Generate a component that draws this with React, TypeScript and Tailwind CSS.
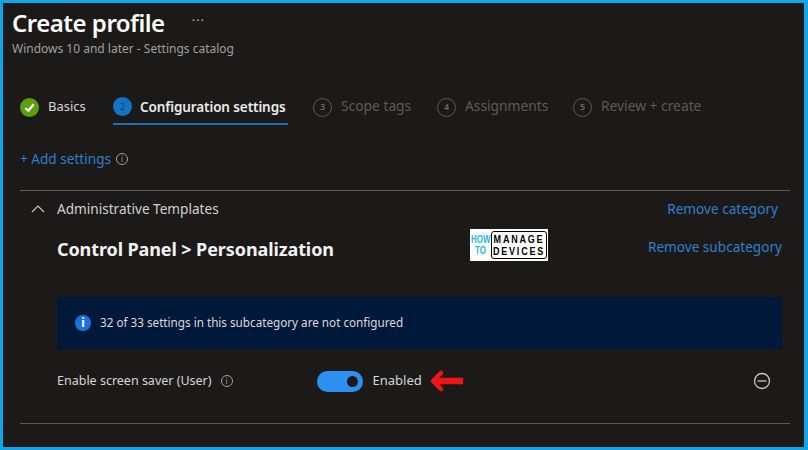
const STEPS = [
  { n: "3", label: "Scope tags", w: "w-[124px]" },
  { n: "4", label: "Assignments", w: "w-[136px]" },
  { n: "5", label: "Review + create", w: "w-auto" },
];

function InfoDot({ className }: { className: string }) {
  return (
    <span
      className={`flex h-3 w-3 items-center justify-center rounded-full border border-[#a19f9d] text-[8px] leading-none text-[#a19f9d] ${className}`}
    >
      i
    </span>
  );
}

export default function App() {
  return (
    <div
      className="flex h-[450px] w-[808px] flex-col overflow-hidden border-t-[3px] border-r-[4px] border-b-[3px] border-l-[3px] border-[#10a5e8] bg-[#1b1a19] text-[#e5e3e1]"
      style={{ fontFamily: '"Noto Sans", "Open Sans", sans-serif' }}
    >
      <div className="pl-[9px] pt-[4px]">
        <div className="flex h-[32px] items-center">
          <h1 className="text-[24px] font-semibold leading-[32px] tracking-[-0.5px] text-white">Create profile</h1>
          <span className="ml-[27px] mb-[6px] text-[13px] leading-none tracking-[1px] text-[#b5b3b1]">···</span>
        </div>
        <div className="mt-[2px] text-[12px] leading-[16px] text-[#a19f9d]">
          Windows 10 and later - Settings catalog
        </div>
      </div>

      <div className="mt-[35px] flex h-[36px] items-start pl-[17px]">
        <div className="flex h-[30px] w-[93px] items-center">
          <span className="flex h-[19px] w-[19px] items-center justify-center rounded-full bg-[#5c9e12]">
            <svg viewBox="0 0 14 14" className="h-[13px] w-[13px]" fill="none" stroke="#fff" strokeWidth="2.4">
              <path d="M2.5 7.5 L5.8 10.5 L11.5 3.5" />
            </svg>
          </span>
          <span className="ml-[9px] text-[13px] text-[#d8d6d4]">Basics</span>
        </div>
        <div className="mr-[25px] flex h-[33px] w-[175px] items-start border-b-[2px] border-[#1c6fb5] pt-[5px]">
          <span className="flex h-[19px] w-[19px] items-center justify-center rounded-full bg-[#1472c4] text-[9px] text-[#12406b]">
            2
          </span>
          <span className="ml-[8px] text-[13.5px] font-semibold leading-[20px] tracking-[-0.1px] text-[#ecebea]">
            Configuration settings
          </span>
        </div>
        {STEPS.map((s) => (
          <div key={s.n} className={`flex h-[30px] items-center ${s.w}`}>
            <span className="flex h-[19px] w-[19px] items-center justify-center rounded-full border border-[#5c5a58] text-[9px] font-semibold text-[#6b6967]">
              {s.n}
            </span>
            <span className="ml-[9px] mb-[1px] text-[13.8px] text-[#5c5a58]">{s.label}</span>
          </div>
        ))}
      </div>

      <div className="mt-[21px] flex h-[20px] items-center pl-[17px] text-[13.6px] text-[#2f7fcb]">
        <span>+ Add settings</span>
        <InfoDot className="ml-[5px]" />
      </div>

      <div className="ml-[17px] mr-[14px] mt-[21px] flex-1">
        <div className="border-t border-[#5a5856]">
          <div className="flex h-[36px] items-center justify-between pr-[12px]">
            <div className="flex items-center">
              <svg viewBox="0 0 16 16" className="ml-[10px] h-[16px] w-[16px]" fill="none" stroke="#c8c6c4" strokeWidth="1.2">
                <path d="M2 11 L8 5 L14 11" />
              </svg>
              <span className="ml-[11px] text-[13.6px] text-[#d2d0ce]">Administrative Templates</span>
            </div>
            <span className="text-[13.6px] text-[#2f7fcb]">Remove category</span>
          </div>
          <div className="mt-[4px] flex h-[38px] items-center pl-[37px] pr-[8px]">
            <span className="mb-[2px] w-[413px] text-[18px] font-bold tracking-[-0.1px] text-[#f3f2f1]">
              Control Panel &gt; Personalization
            </span>
            <div className="mb-[10px] flex h-[32px] w-[78px] items-center bg-white pl-[1px]">
              <div
                className="w-[19px] text-center text-[8px] font-bold leading-[11px] text-[#2bb5ea]"
                style={{ fontFamily: '"Liberation Sans", sans-serif' }}
              >
                <div className="scale-y-[1.3]">HOW</div>
                <div className="scale-y-[1.3]">TO</div>
              </div>
              <div
                className="ml-[1px] flex h-[28px] w-[56px] flex-col items-center justify-center rounded-[3px] border-[1.5px] border-black text-[9px] font-bold leading-[12px] tracking-[1.8px] text-black"
                style={{ fontFamily: '"Liberation Sans", sans-serif' }}
              >
                <div className="scale-y-[1.25]">MANAGE</div>
                <div className="scale-y-[1.25]">DEVICES</div>
              </div>
            </div>
            <span className="ml-auto mb-[6px] text-[13.6px] text-[#2f7fcb]">Remove subcategory</span>
          </div>
          <div className="ml-[37px] mr-[8px] mt-[28px] flex h-[52px] items-center bg-[#00183a] pl-[18px]">
            <span className="flex h-4 w-4 items-center justify-center rounded-full bg-[#1a73d9]">
              <span className="text-[12px] font-bold leading-none text-white">i</span>
            </span>
            <span className="ml-[9px] text-[11.7px] text-[#dcdad8]">32 of 33 settings in this subcategory are not configured</span>
          </div>
          <div className="ml-[37px] mr-[19px] mt-[12px] flex h-[40px] items-center">
            <span className="text-[12.5px] text-[#d8d6d4]">Enable screen saver (User)</span>
            <InfoDot className="ml-[9px]" />
            <div className="ml-[84px] flex h-[21px] w-[46px] items-center justify-end rounded-full bg-[#2b90ef] pr-[5px]">
              <span className="h-[11px] w-[11px] rounded-full bg-[#1b1a19]" />
            </div>
            <span className="ml-[10px] text-[13px] text-[#d8d6d4]">Enabled</span>
            <svg viewBox="0 0 36 24" className="ml-[7px] h-[24px] w-[36px]" fill="none" stroke="#f01414" strokeLinecap="round" strokeLinejoin="round">
              <path d="M12 4 L4 12 L12 20" strokeWidth="4.5" />
              <path d="M6 12 H34" strokeWidth="6.5" strokeLinecap="butt" />
            </svg>
            <svg viewBox="0 0 18 18" className="ml-auto h-[18px] w-[18px]" fill="none" stroke="#c8c6c4">
              <circle cx="9" cy="9" r="7.5" strokeWidth="1.3" />
              <path d="M4.5 9 H13.5" strokeWidth="1.3" />
            </svg>
          </div>
          <div className="mt-[22px] border-t border-[#5a5856]" />
        </div>
      </div>
    </div>
  );
}
